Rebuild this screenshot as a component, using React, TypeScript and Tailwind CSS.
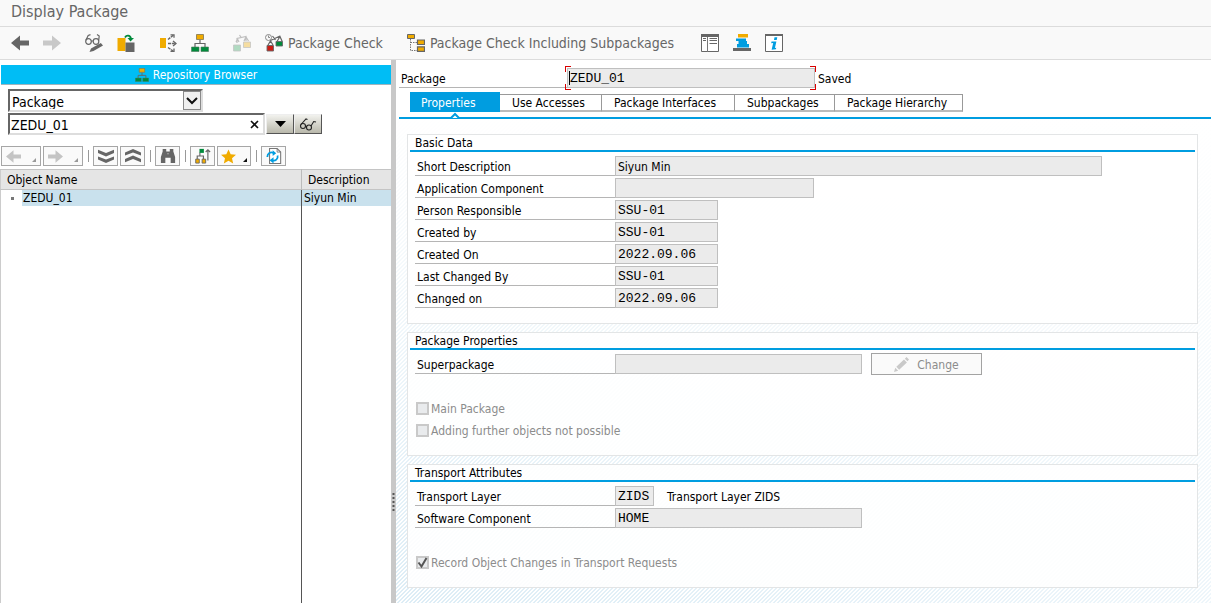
import { useState } from "react";
import type { ReactNode } from "react";

const MONO = "font-['Liberation_Mono',monospace] text-[13px]";
const UI = "text-[12px] leading-[14px]";

function Icon({ children, size = 18, className = "" }: { children: ReactNode; size?: number; className?: string }) {
  return (
    <svg width={size} height={size} viewBox="0 0 18 18" fill="none" aria-hidden="true" className={`block shrink-0 ${className}`}>
      {children}
    </svg>
  );
}

function ArrowLeftGlyph({ color }: { color: string }) {
  return <path d="M0 9 9 1.500V6.500H18V11.500H9V16.500Z" fill={color} />;
}
function ArrowRightGlyph({ color }: { color: string }) {
  return <path d="M18 9 9 1.500V6.500H0V11.500H9V16.500Z" fill={color} />;
}
function HierarchyGlyph() {
  return (
    <>
      <path d="M9 6V9.500M4 13V9.500H14V13" stroke="#666" strokeWidth="1.200" />
      <path d="M5.500 .5h7v5h-7z" fill="#f0ab00" stroke="#7f7350" strokeWidth=".8" />
      <path d="M.5 13h7.500v4.500H.5zM10 13h7.500v4.500H10z" fill="#008a3b" stroke="#4c7a5c" strokeWidth=".6" />
    </>
  );
}
function GlassesPencil() {
  return (
    <>
      <circle cx="3.500" cy="7.500" r="2.800" stroke="#666" strokeWidth="1.200" />
      <circle cx="11" cy="7.500" r="2.800" stroke="#666" strokeWidth="1.200" />
      <path d="M6.300 7h1.900M1 6 3.200 1.500 5.500 .6M13.700 6.500 14.200 2 12 .6" stroke="#666" strokeWidth="1.200" />
      <path d="M15.800 9 18 11.500 8.500 17 4.500 18 6 14.500Z" fill="#666" />
    </>
  );
}
function CopyObject() {
  return (
    <>
      <path d="M.5 4h8v13h-8z" fill="#f0ab00" />
      <path d="M8.500 8.500h9V18h-9z" fill="#666" />
      <path d="M8 3.500C9.500 .8 13 .8 14 4.500" stroke="#008a3b" strokeWidth="1.800" />
      <path d="M10.500 4h6.500L13.500 7.500Z" fill="#008a3b" />
    </>
  );
}
function SplitArrows() {
  return (
    <>
      <path d="M1 4h6v10H1z" fill="#f0ab00" />
      <path d="M9 5.500 14.500 1M9 9.500H17M9 13.500l5 3.500" stroke="#666" strokeWidth="1.400" strokeDasharray="3 .8" />
      <path d="M11.500 .8h3.500v3M14 7l3 2.500L14 12M11.500 17.400H15v-3" stroke="#666" strokeWidth="1.300" />
    </>
  );
}
function Scales() {
  return (
    <g opacity=".35">
      <path d="M4 9V4.500L13 2.500V7M6.500 1l2 3M3 8l1.500-3L6 8M11 7l2-4 2.500 4" stroke="#555" strokeWidth="1.200" />
      <path d="M.5 11h7v6h-7z" fill="#2ba35c" stroke="#666" strokeWidth=".8" />
      <path d="M10.500 8h7v5.500h-7z" fill="#f0ab00" stroke="#666" strokeWidth=".8" />
    </g>
  );
}
function CheckScales() {
  return (
    <>
      <circle cx="3.500" cy="3.500" r="3" stroke="#888" />
      <path d="M3.500 1.500v2H5" stroke="#888" />
      <path d="M5.500 6.500 15 2M7.500 2l3 4M3 11l2.500-4L8 11M12 7.500l3-5 2.200 5" stroke="#666" strokeWidth="1.200" />
      <path d="M2 11.500h6.500v5.500H2z" fill="#cc1c14" stroke="#666" strokeWidth=".9" />
      <path d="M11 7.500h6.500V12H11z" fill="#008a3b" stroke="#666" strokeWidth=".9" />
    </>
  );
}
function TreeCheck() {
  return (
    <>
      <path d="M3.500 5v11.500H10M3.500 8.500H10" stroke="#777" strokeDasharray="1.500 1" />
      <path d="M.5 .5h7v4h-7z" fill="#f0ab00" stroke="#666" />
      <path d="M10.500 6h7v4.500h-7zM10.500 12.800h7v4.500h-7z" fill="#f0ab00" stroke="#666" strokeWidth="1.200" />
    </>
  );
}
function TableDoc() {
  return (
    <>
      <path d="M.5 .5h17v17H.5z" fill="#fff" stroke="#666" />
      <path d="M0 0h18v3H0z" fill="#666" />
      <path d="M6.500 3v15" stroke="#777" />
      <path d="M2 4.500h3M2 6.500h3M8.500 4.500H16M8.500 6.500H16M8.500 9.500H16" stroke="#666" />
    </>
  );
}
function Stack() {
  return (
    <>
      <path d="M5 0h10v3.500H5z" fill="#f0ab00" />
      <path d="M3 4.500h10V7H3zM5.500 7h8.500v3H5.500zM4 10h12v3.500H4z" fill="#009de0" />
      <path d="M0 14h18v3H0z" fill="#666" />
    </>
  );
}
function Info() {
  return (
    <>
      <path d="M.5 .5h17v17H.5z" fill="#fff" stroke="#666" />
      <path d="M0 0h18v2H0z" fill="#666" />
      <path d="M9.500 3.200h2.800L11.700 6H9zM6.500 7.500h4.900L9.900 14l1.400-.3-.4 1.500-4.300.6L8.200 9l-2 .2Z" fill="#009de0" />
    </>
  );
}

function ToolButton({ label, children, text }: { label: string; children: ReactNode; text?: string }) {
  return (
    <button type="button" aria-label={label} className="flex items-center gap-[5px] text-[14px] leading-[18px] whitespace-nowrap text-[#666]">
      <Icon>{children}</Icon>
      {text && <span>{text}</span>}
    </button>
  );
}

function SmallButton({ label, children, menu = false, muted = false }: { label: string; children: ReactNode; menu?: boolean; muted?: boolean }) {
  return (
    <button
      type="button"
      aria-label={label}
      className={`flex h-5 items-center border border-[#a6a6a6] bg-[#fafafa] ${menu ? "w-10 justify-between pr-1 pl-1" : "w-[25px] justify-center"}`}
    >
      {children}
      {menu && (
        <svg width="4" height="4" viewBox="0 0 4 4" className="mb-[3px] self-end" aria-hidden="true">
          <path d="M4 0v4H0Z" fill={muted ? "#999" : "#111"} />
        </svg>
      )}
    </button>
  );
}

function Divider() {
  return (
    <span className="flex w-[6px] justify-center">
      <span className="h-3 w-px bg-[#999]" />
    </span>
  );
}

function Sidebar() {
  const [kind, setKind] = useState("Package");
  const [name, setName] = useState("ZEDU_01");
  return (
    <aside className="flex w-[391px] shrink-0 flex-col bg-white pt-[5px]">
      <h2 className="ml-px flex h-5 items-center justify-center gap-1 border-b border-[#9fb4bd] bg-[#00bdf5] pt-px text-[12px] text-white">
        <Icon size={14}>
          <HierarchyGlyph />
        </Icon>
        Repository Browser
      </h2>
      <div className="flex flex-col gap-px pt-1 pl-2 text-[14px]">
        <div className="relative h-[23px] w-[195px]">
          <select
            aria-label="Object type"
            value={kind}
            onChange={(e) => setKind(e.target.value)}
            className="h-full w-full appearance-none border-2 border-t-[#666] border-r-[#ddd] border-b-[#ddd] border-l-[#666] bg-white pt-[2px] pl-[2px] outline-none"
          >
            <option>Package</option>
            <option>Program</option>
          </select>
          <span className="pointer-events-none absolute top-[2px] right-[2px] flex h-[19px] w-[18px] items-center justify-center border border-[#8a8a8a] bg-[#f0f0f0]">
            <svg width="12" height="8" viewBox="0 0 12 8" fill="none" aria-hidden="true">
              <path d="M1 1l5 5 5-5" stroke="#111" strokeWidth="2" />
            </svg>
          </span>
        </div>
        <div className="flex items-center gap-px">
          <div className="flex h-[22px] w-[257px] items-center border-2 border-t-[#666] border-r-[#ddd] border-b-[#ddd] border-l-[#666] bg-white pr-1">
            <input aria-label="Object name" value={name} onChange={(e) => setName(e.target.value)} className="min-w-0 flex-1 bg-transparent pt-[2px] pl-px outline-none" />
            <button type="button" aria-label="Clear" onClick={() => setName("")}>
              <svg width="9" height="9" viewBox="0 0 9 9" aria-hidden="true">
                <path d="M1 1l7 7M8 1 1 8" stroke="#111" strokeWidth="1.600" />
              </svg>
            </button>
          </div>
          <div className="flex">
            <button
              type="button"
              aria-label="History"
              className="flex h-5 w-7 items-center justify-center border border-t-[#eee] border-r-[#555] border-b-[#555] border-l-[#eee] bg-linear-to-b from-[#f2f2ee] to-[#b9b8ab]"
            >
              <svg width="11" height="6" viewBox="0 0 11 6" aria-hidden="true">
                <path d="M0 0h11L5.500 6Z" fill="#000" />
              </svg>
            </button>
            <button
              type="button"
              aria-label="Display"
              className="flex h-5 w-7 items-center justify-center border border-t-[#eee] border-r-[#555] border-b-[#555] border-l-[#eee] bg-linear-to-b from-[#f2f2ee] to-[#b9b8ab]"
            >
              <svg width="18" height="13" viewBox="0 0 18 13" fill="none" stroke="#222" strokeWidth="1.100" aria-hidden="true">
                <circle cx="4" cy="8" r="2.500" />
                <circle cx="10" cy="9.500" r="2.500" />
                <path d="M6.500 8l1.200.8M2 6.500 7 1 8.500 1.500M12 8l2.700-4.500L17 4" />
              </svg>
            </button>
          </div>
        </div>
      </div>
      <div className="flex items-center gap-[2px] pt-[11px] pb-[3px] pl-px">
        <SmallButton label="Back" menu muted>
          <Icon size={15}>
            <ArrowLeftGlyph color="#c4c4c4" />
          </Icon>
        </SmallButton>
        <SmallButton label="Forward" menu muted>
          <Icon size={15}>
            <ArrowRightGlyph color="#c4c4c4" />
          </Icon>
        </SmallButton>
        <Divider />
        <SmallButton label="Expand subtree">
          <Icon size={16}>
            <path d="M0 2l9 3.500L18 2v3.500L9 9.500 0 5.500ZM0 9.500 9 13l9-3.500V13l-9 4-9-4Z" fill="#666" />
          </Icon>
        </SmallButton>
        <SmallButton label="Collapse subtree">
          <Icon size={16}>
            <path d="M0 16l9-3.500L18 16v-3.500L9 8.500 0 12.500ZM0 8.500 9 5l9 3.500V5L9 1 0 5Z" fill="#666" />
          </Icon>
        </SmallButton>
        <Divider />
        <SmallButton label="Find">
          <Icon size={16}>
            <path d="M3 1h4v3h4V1h4v3l2 6v7h-5v-6H6v6H1v-7l2-6Z" fill="#666" />
            <path d="M8 6.500h2" stroke="#ccc" strokeWidth=".8" />
          </Icon>
        </SmallButton>
        <Divider />
        <SmallButton label="Object hierarchy">
          <Icon size={16}>
            <path d="M5.500 5v4M2.500 13V9h7v4M14.500 14V2M12 4.500 14.500 2 17 4.500" stroke="#666" strokeWidth="1.300" />
            <path d="M5 1h5v4.500H5z" fill="#008a3b" />
            <path d="M.8 12.500h4v4.500h-4zM8 12.500h4v4.500H8z" fill="#f0ab00" stroke="#666" />
          </Icon>
        </SmallButton>
        <button type="button" aria-label="Favorites" className="flex h-5 w-[34px] items-center justify-between border border-[#a6a6a6] bg-[#fafafa] px-[3px]">
          <Icon size={15}>
            <path d="M9 .5l2.600 5.800 6.400.6-4.800 4.200 1.400 6.300L9 14.100l-5.600 3.300 1.400-6.300L0 6.900l6.400-.6Z" fill="#f0ab00" />
          </Icon>
          <svg width="4" height="4" viewBox="0 0 4 4" className="mb-[3px] self-end" aria-hidden="true">
            <path d="M4 0v4H0Z" fill="#111" />
          </svg>
        </button>
        <Divider />
        <SmallButton label="Refresh">
          <Icon size={16}>
            <path d="M4 .6h8.500l4 4v12.800H4z" fill="#fff" stroke="#777" strokeWidth="1.200" />
            <path d="M12.500 .6v4h4" stroke="#777" />
            <path d="M1.500 10C1.500 6 5 4 8.500 5.500M13 8.500c1 4-2.500 6.500-6 5.500" stroke="#009de0" strokeWidth="2" />
            <path d="M7.500 2.500 11.500 6 7.500 9ZM8.500 10.500 4 13.800 8.500 17.500Z" fill="#009de0" />
          </Icon>
        </SmallButton>
      </div>
      <table className={`w-full flex-1 table-fixed border-collapse border-l border-[#ccc] text-left ${UI}`}>
        <colgroup>
          <col className="w-[301px]" />
          <col />
        </colgroup>
        <thead>
          <tr className="h-5 border-t border-b border-[#c4c4c4] bg-[#e5e5e5]">
            <th className="border-r border-[#bbb] p-0 pl-[6px] font-normal">Object Name</th>
            <th className="p-0 pl-[6px] font-normal">Description</th>
          </tr>
        </thead>
        <tbody>
          <tr className="h-[17px]">
            <td className="border-r border-[#555] p-0">
              <div className="flex h-4 items-center">
                <span className="mr-[8px] ml-[10px] size-[3px] shrink-0 bg-[#777]" />
                <span className="flex h-full flex-1 items-center bg-[#c9e1ed] pl-px">ZEDU_01</span>
              </div>
            </td>
            <td className="p-0">
              <div className="flex h-4 items-center bg-[#c9e1ed] pl-[2px]">Siyun Min</div>
            </td>
          </tr>
          <tr className="h-full">
            <td className="border-r border-[#555]" />
            <td />
          </tr>
        </tbody>
      </table>
    </aside>
  );
}

type FieldProps = { id: string; label: string; value?: string; width: string; mono?: boolean; children?: ReactNode };

function Field({ id, label, value = "", width, mono = false, children }: FieldProps) {
  return (
    <div className="flex h-5 items-center">
      <label htmlFor={id} className="flex h-full w-[200px] shrink-0 items-center border-b border-[#b5b5b5] pt-[2px] pl-[2px]">
        {label}
      </label>
      <input
        id={id}
        readOnly
        value={value}
        className={`h-full min-w-0 border border-[#bfbfbf] bg-[#ebebeb] px-[2px] outline-none ${width} ${mono ? MONO : "pt-[2px]"}`}
      />
      {children}
    </div>
  );
}

function Check({ id, label, checked = false }: { id: string; label: string; checked?: boolean }) {
  return (
    <div className="flex h-5 items-center gap-[2px] pl-px text-[#8c8c8c]">
      <span className="relative block size-[13px]">
        <input id={id} type="checkbox" disabled defaultChecked={checked} className="block size-[13px] appearance-none border-2 border-[#c9c9c9] bg-[#e9ebed]" />
        {checked && (
          <svg width="13" height="13" viewBox="0 0 13 13" fill="none" className="pointer-events-none absolute inset-0" aria-hidden="true">
            <path d="M2.500 6.500 5.500 10.500 10.500 2" stroke="#555" strokeWidth="2" />
          </svg>
        )}
      </span>
      <label htmlFor={id} className="pt-[2px]">
        {label}
      </label>
    </div>
  );
}

function Group({ title, className, children }: { title: string; className: string; children: ReactNode }) {
  return (
    <section className={`border border-[#e3e5e6] bg-white/90 px-[2px] ${className}`}>
      <h3 className="flex h-[17px] items-center border-b-2 border-[#009de0] pl-[5px]">{title}</h3>
      <div className="flex flex-col gap-[2px] pt-1 pl-[5px]">{children}</div>
    </section>
  );
}

const TABS = [
  { name: "Properties", width: "w-[90px]" },
  { name: "Use Accesses", width: "w-[102px]" },
  { name: "Package Interfaces", width: "w-[133px]" },
  { name: "Subpackages", width: "w-[100px]" },
  { name: "Package Hierarchy", width: "w-[128px]" },
];

function Detail() {
  const [tab, setTab] = useState("Properties");
  return (
    <main className="min-w-0 flex-1 bg-[linear-gradient(to_bottom,#fff_10%,rgba(255,255,255,0.1)),linear-gradient(to_right,transparent,rgba(255,255,255,0.5)),repeating-linear-gradient(135deg,#d9ebf5_0px,#d9ebf5_1.400px,#fff_1.400px,#fff_2.828px)] pt-2 pl-[3px]">
      <div className="flex h-5 items-center">
        <label htmlFor="package" className="flex h-full w-[168px] items-center border-b border-[#b5b5b5] pt-[2px] pl-[2px]">
          Package
        </label>
        <span className="relative flex h-5 w-[248px]">
          <input id="package" readOnly value="ZEDU_01" className={`h-full w-full border border-[#bfbfbf] bg-[#ebebeb] px-[2px] outline-none ${MONO}`} />
          <span className="absolute top-[3px] left-[2px] h-[14px] w-px bg-black" />
          <span className="absolute -top-[2px] -left-[2px] size-[6px] border-0 border-t border-l border-t-[#d90000] border-l-[#d90000]" />
          <span className="absolute -bottom-[2px] -left-[2px] size-[6px] border-0 border-b border-l border-b-[#d90000] border-l-[#d90000]" />
          <span className="absolute -top-[2px] -right-px size-[6px] border-0 border-t border-r border-t-[#d90000] border-r-[#d90000]" />
          <span className="absolute -right-px -bottom-[2px] size-[6px] border-0 border-r border-b border-r-[#d90000] border-b-[#d90000]" />
        </span>
        <span className="pt-[2px] pl-[3px]">Saved</span>
      </div>
      <div role="tablist" className="flex items-end border-b-2 border-[#009de0] pt-1 pb-[5px] pl-[11px]">
        {TABS.map((t) =>
          t.name === tab ? (
            <button key={t.name} type="button" role="tab" aria-selected="true" className={`relative flex h-5 items-center bg-[#009de0] pt-[2px] pl-[11px] text-white ${t.width}`}>
              {t.name}
              <svg width="10" height="6" viewBox="0 0 10 6" fill="none" className="absolute -bottom-[6px] left-10" aria-hidden="true">
                <path d="M1 6l4-4 4 4" fill="#fff" stroke="#009de0" strokeWidth="2" />
              </svg>
            </button>
          ) : (
            <button
              key={t.name}
              type="button"
              role="tab"
              aria-selected="false"
              onClick={() => setTab(t.name)}
              className={`flex h-[18px] items-center border-t border-r border-b-2 border-t-[#999] border-r-[#999] border-b-[#bbb] bg-white pl-3 whitespace-nowrap ${t.width}`}
            >
              {t.name}
            </button>
          ),
        )}
      </div>
      <div className="flex flex-col gap-2 py-[15px] pr-[13px] pl-2">
        <Group title="Basic Data" className="min-h-[190px]">
          <Field id="short" label="Short Description" value="Siyun Min" width="w-[487px]" />
          <Field id="component" label="Application Component" width="w-[199px]" />
          <Field id="person" label="Person Responsible" value="SSU-01" width="w-[103px]" mono />
          <Field id="createdby" label="Created by" value="SSU-01" width="w-[103px]" mono />
          <Field id="createdon" label="Created On" value="2022.09.06" width="w-[103px]" mono />
          <Field id="changedby" label="Last Changed By" value="SSU-01" width="w-[103px]" mono />
          <Field id="changedon" label="Changed on" value="2022.09.06" width="w-[103px]" mono />
        </Group>
        <Group title="Package Properties" className="min-h-[124px]">
          <Field id="super" label="Superpackage" width="w-[247px]">
            <button type="button" disabled className="ml-[9px] flex h-[22px] w-[111px] items-center justify-center gap-2 border border-[#a3a3a3] bg-[#fafafa] text-[#8c8c8c]">
              <Icon size={15}>
                <path d="M0 18l1.500-5 3.500 3.500ZM2.800 11.800 12 3l3.500 3.500L6.200 15.200ZM13 2l2-2 3 3-1.800 2.200Z" fill="#c9c9c9" />
              </Icon>
              <span className="pt-[2px]">Change</span>
            </button>
          </Field>
          <div className="flex flex-col gap-[2px] pt-[22px]">
            <Check id="main" label="Main Package" />
            <Check id="adding" label="Adding further objects not possible" />
          </div>
        </Group>
        <Group title="Transport Attributes" className="min-h-[124px]">
          <Field id="layer" label="Transport Layer" value="ZIDS" width="w-[39px]" mono>
            <span className="pt-[2px] pl-[13px]">Transport Layer ZIDS</span>
          </Field>
          <Field id="software" label="Software Component" value="HOME" width="w-[247px]" mono />
          <div className="pt-[22px]">
            <Check id="record" label="Record Object Changes in Transport Requests" checked />
          </div>
        </Group>
      </div>
    </main>
  );
}

export default function App() {
  return (
    <div className={`flex min-h-screen flex-col bg-white font-['DejaVu_Sans_Condensed','Noto_Sans',sans-serif] text-black ${UI}`}>
      <header className="bg-[#f9f9f9]">
        <h1 className="flex h-[27px] items-center border-b border-[#dcdcdc] pb-[2px] pl-[11px] text-[16px] text-[#666]">Display Package</h1>
        <div className="flex h-[33px] items-center gap-6 border-b border-[#dcdcdc] pl-[11px]">
          <div className="flex gap-[14px]">
            <ToolButton label="Back"><ArrowLeftGlyph color="#666" /></ToolButton>
            <ToolButton label="Forward"><ArrowRightGlyph color="#c8c8c8" /></ToolButton>
          </div>
          <div className="flex gap-[14px]">
            <ToolButton label="Display / Change"><GlassesPencil /></ToolButton>
            <ToolButton label="Other object"><CopyObject /></ToolButton>
          </div>
          <div className="flex gap-[14px]">
            <ToolButton label="Where-used list"><SplitArrows /></ToolButton>
            <ToolButton label="Object list"><HierarchyGlyph /></ToolButton>
          </div>
          <div className="flex gap-[14px]">
            <ToolButton label="Compare"><Scales /></ToolButton>
            <ToolButton label="Package Check" text="Package Check"><CheckScales /></ToolButton>
          </div>
          <ToolButton label="Package Check Including Subpackages" text="Package Check Including Subpackages"><TreeCheck /></ToolButton>
          <div className="flex gap-[14px] pl-[3px]">
            <ToolButton label="Documentation"><TableDoc /></ToolButton>
            <ToolButton label="Object stack"><Stack /></ToolButton>
            <ToolButton label="Information"><Info /></ToolButton>
          </div>
        </div>
      </header>
      <div className="flex flex-1">
        <Sidebar />
        <div className="flex w-[5px] shrink-0 flex-col items-center justify-center bg-[#c8c8c8] pt-[340px]">
          <svg width="3" height="20" viewBox="0 0 3 20" aria-hidden="true">
            <path d="M1.500 1v18" stroke="#555" strokeWidth="2" strokeDasharray="2 2" />
          </svg>
        </div>
        <Detail />
      </div>
    </div>
  );
}
